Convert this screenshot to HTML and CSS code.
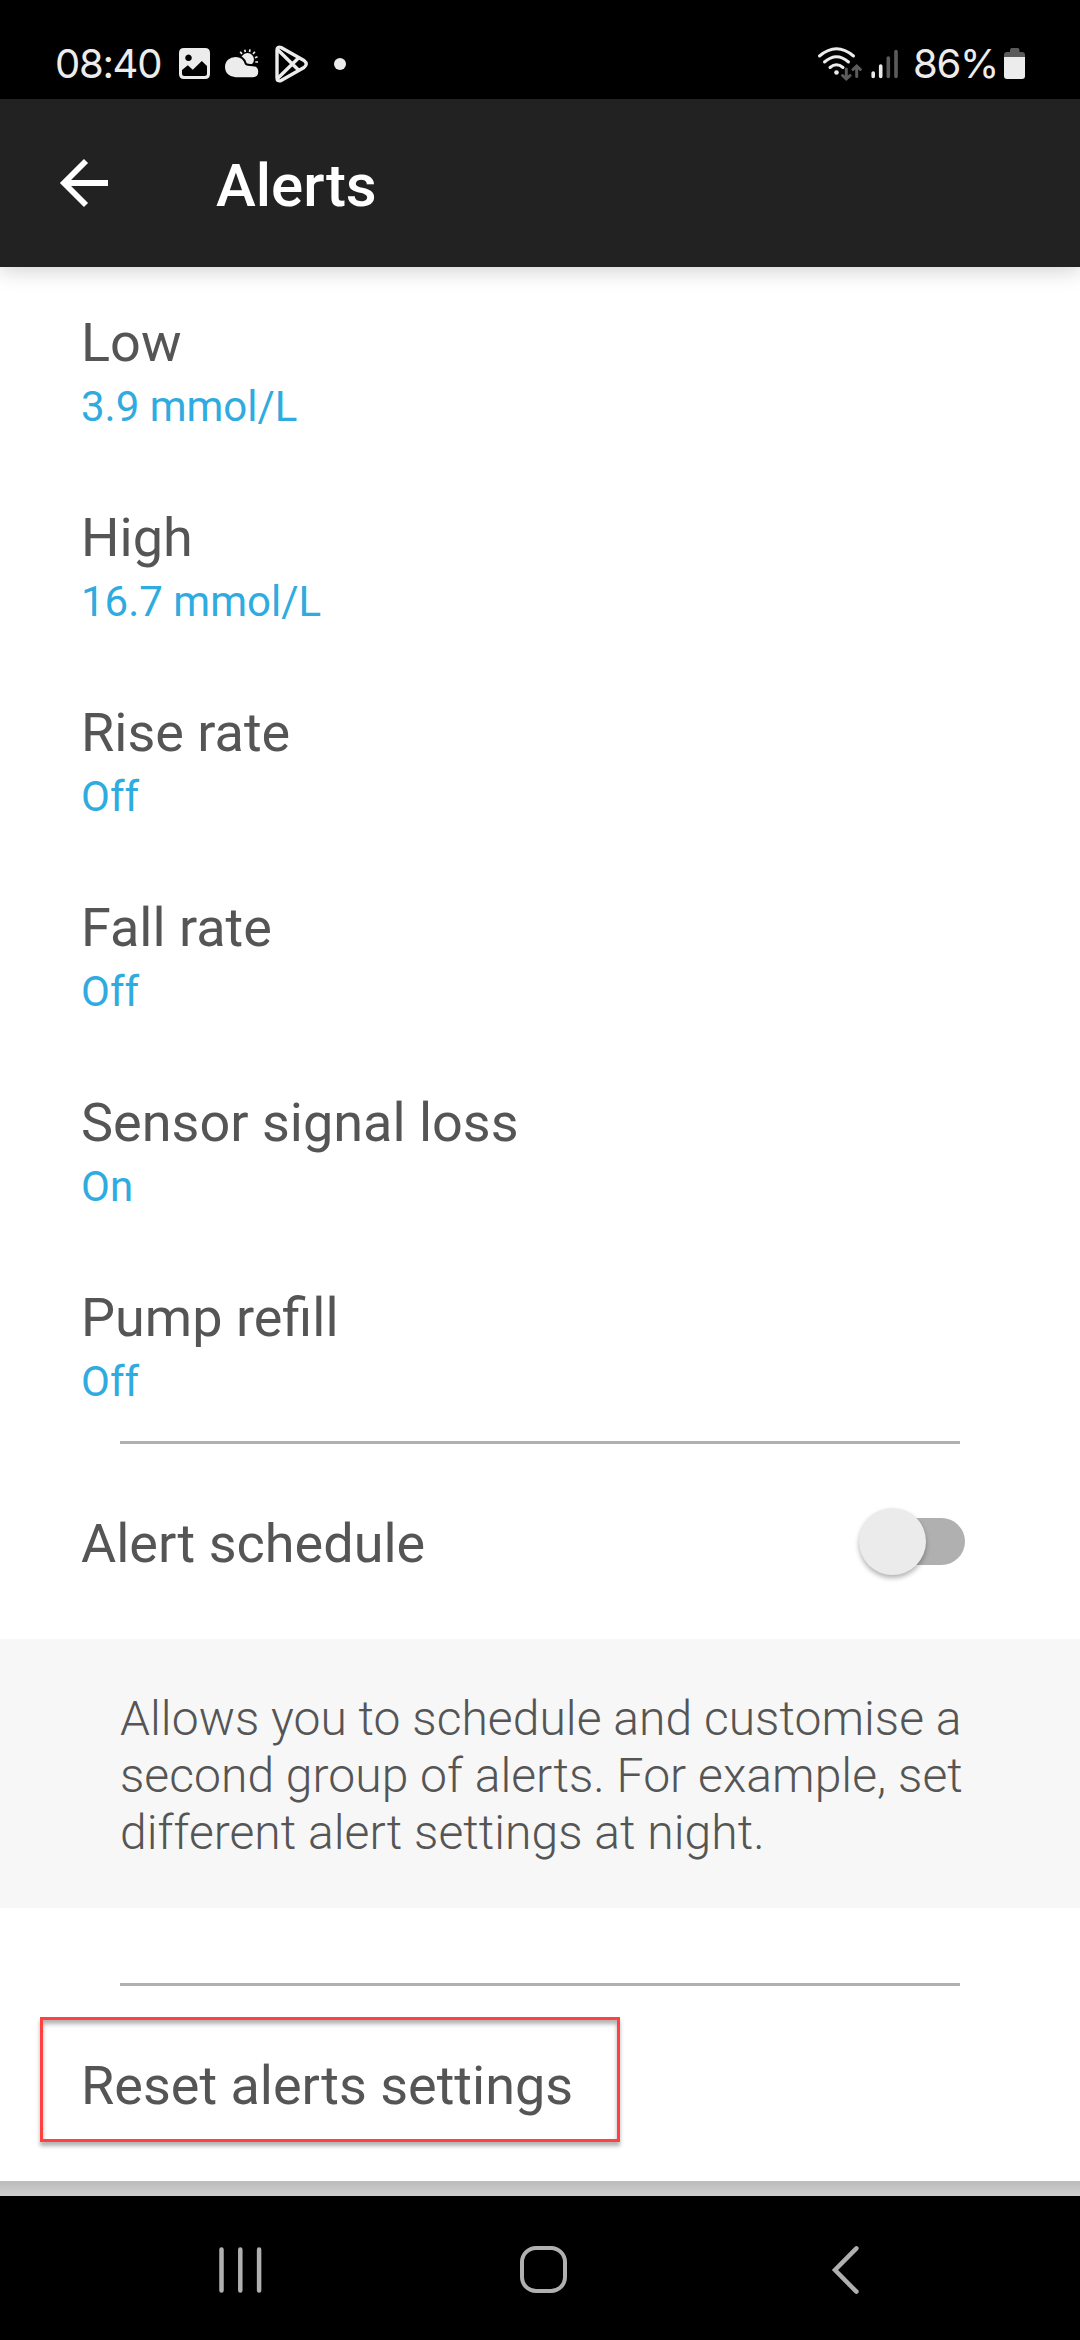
FILE: index.html
```html
<!DOCTYPE html>
<html lang="en">
<head>
  <meta charset="utf-8">
  <title>Alerts</title>
  <link rel="stylesheet" href="styles.css">
</head>
<body>
  <div class="statusbar">
    <span class="clock">08:40</span>
    <svg class="ic-image" width="31" height="31" viewBox="0 0 31 31">
      <path fill="#ececec" fill-rule="evenodd" d="M5 0H26Q31 0 31 5V26Q31 31 26 31H5Q0 31 0 26V5Q0 0 5 0ZM9.500 6.500a3.300 3.300 0 1 0 .01 0ZM3 22V25.500Q3 28 5.500 28H25.500Q28 28 28 25.500V18L22.800 13L13.800 21.800L8.800 17.300Z"/>
    </svg>
    <svg class="ic-weather" width="34" height="30" viewBox="0 0 34 30">
      <circle cx="22.500" cy="10.500" r="6.500" fill="#ececec"/>
      <path stroke="#ececec" stroke-width="1.700" d="M17 5L15.200 2.800M20.300 3L19.700 .8M24.500 3L25 .4M28 5L29.900 2.800M30 8.800L32.500 7.800M30.300 13H33"/>
      <path fill="#ececec" stroke="#000" stroke-width="2" d="M10.500 7C15.500 7 19.500 10 20.800 14.800C22 16.100 24 16.200 27.500 16.200C31.500 16.200 34.200 19 34.200 22.700C34.200 26.400 31.500 29.200 27.700 29.200H10.500C4 29.200 -1 24.500 -1 18C-1 11.500 4 7 10.500 7Z"/>
    </svg>
    <svg class="ic-play" width="34" height="38" viewBox="0 0 34 38" fill="none" stroke="#ececec" stroke-width="3.400" stroke-linejoin="round">
      <path d="M2 5V33Q2 37 6.500 35.300L29 22.500Q33.500 19 29 15.500L6.500 2.700Q2 1 2 5Z"/>
      <path d="M2.500 4.500L24 25.500M2.500 33.500L24 12.500"/>
    </svg>
    <i class="dot"></i>

    <svg class="ic-wifi" width="46" height="36" viewBox="0 0 46 36" fill="none" stroke-linecap="round">
      <g stroke="#ececec" stroke-width="3">
        <path d="M2.500 10Q19.500 -4.500 36.500 10"/>
        <path d="M7.500 16Q19.500 5.500 31.500 16"/>
        <path d="M13 21.500Q19.500 16 26 21.500"/>
      </g>
      <circle cx="19.500" cy="26.500" r="2.300" fill="#ececec"/>
      <g stroke="#5b5b5b" stroke-width="3">
        <path d="M29.300 23V32.500M25.500 29.500L29.300 33L33.100 29.500"/>
        <path d="M39.700 30.500V21M36 23.500L39.700 20L43.400 23.500"/>
      </g>
    </svg>
    <svg class="ic-signal" width="28" height="30" viewBox="0 0 28 30" stroke-width="3.600" stroke-linecap="round">
      <path stroke="#ececec" d="M2.200 24V27.500M9.700 17V27.500"/>
      <path stroke="#5b5b5b" d="M17.300 9V27.500M25 2.500V27.500"/>
    </svg>
    <span class="percent">86%</span>
    <svg class="ic-battery" width="21" height="31" viewBox="0 0 21 31">
      <path fill="#5b5b5b" d="M0 9V7Q0 4 3 4H6V2Q6 0 8 0H13.500Q15.500 0 15.500 2V4H18Q21 4 21 7V9Z"/>
      <path fill="#ececec" d="M0 9H21V28Q21 31 18 31H3Q0 31 0 28Z"/>
    </svg>
  </div>

  <header class="appbar">
    <svg width="48" height="48" viewBox="0 0 48 48" fill="none" stroke="#fff" stroke-width="5.800">
      <path d="M48 24H4M26 2L4 24L26 46"/>
    </svg>
    <h1>Alerts</h1>
  </header>

  <main class="page">
    <ul class="settings">
      <li><span class="name">Low</span><span class="value">3.9 mmol/L</span></li>
      <li><span class="name">High</span><span class="value">16.7 mmol/L</span></li>
      <li><span class="name">Rise rate</span><span class="value">Off</span></li>
      <li><span class="name">Fall rate</span><span class="value">Off</span></li>
      <li><span class="name">Sensor signal loss</span><span class="value">On</span></li>
      <li><span class="name">Pump refill</span><span class="value">Off</span></li>
    </ul>
    <hr>
    <div class="schedule">
      <span class="name">Alert schedule</span>
      <span class="switch"><i></i></span>
    </div>
    <p class="hint">Allows you to schedule and customise a<br>second group of alerts. For example, set<br>different alert settings at night.</p>
    <hr>
    <div class="reset"><span class="name">Reset alerts settings</span></div>
  </main>
  <div class="edge"></div>

  <nav class="navbar">
    <svg class="recents" width="43" height="46" viewBox="0 0 43 46" stroke="#b0b0b0" stroke-width="4.500" stroke-linecap="round">
      <path d="M2.500 2.500V43.500M21.300 2.500V43.500M40.100 2.500V43.500"/>
    </svg>
    <i class="home"></i>
    <svg class="back" width="28" height="48" viewBox="0 0 28 48" fill="none" stroke="#b0b0b0" stroke-width="4.500" stroke-linecap="round">
      <path d="M24.400 2.300L3 24L24.400 45.700"/>
    </svg>
  </nav>
</body>
</html>
```
FILE: styles.css
```css
* { box-sizing: border-box; }
body { margin: 0; width: 1080px; height: 2340px; overflow: hidden; background: #fff; font-family: Roboto, "Liberation Sans", sans-serif; }
svg { display: block; flex: none; overflow: visible; }

/* status bar */
.statusbar { display: flex; height: 99px; padding: 28px 55px 0 55px; align-items: center; background: #000; color: #ececec; font: 400 40px/40px Inter, sans-serif; letter-spacing: -1.3px; }
.clock { width: 124px; }
.ic-weather { margin-left: 15px; }
.ic-play { margin-left: 16px; }
.dot { width: 12px; height: 12px; margin-left: 25px; border-radius: 50%; background: #ececec; }
.ic-wifi { margin-left: auto; }
.ic-signal { margin-left: 8px; }
.percent { width: 91px; margin-left: 14px; }

/* title bar */
.appbar { position: relative; display: flex; height: 168px; padding-left: 60px; align-items: center; background: #222; box-shadow: 0 4px 20px rgba(0,0,0,.18); }
.appbar h1 { margin: 5px 0 0 108px; color: #fff; font-size: 60px; font-weight: 500; line-height: 70px; }

.page { height: 1914px; padding-top: 44px; color: #555; }
.name { font-size: 54px; line-height: 64px; }
.settings { margin: 0; padding: 0 81px; list-style: none; }
.settings li { display: flex; flex-direction: column; height: 195px; }
.settings .value { color: #2fabdf; font-size: 42px; line-height: 50px; margin-top: 7px; }
hr { width: 840px; height: 3px; margin: 0 auto; border: 0; background: #b0b0b0; }
.settings + hr { margin-top: -40px; }

.schedule { display: flex; height: 195px; padding: 0 115px 0 81px; align-items: center; justify-content: space-between; }
.schedule .name { padding-top: 5px; }
.switch { display: flex; width: 94px; height: 47px; align-items: center; border-radius: 24px; background: #b0b0b0; }
.switch i { flex: none; width: 67px; height: 67px; margin-left: -12px; border-radius: 50%; background: #ebebeb; box-shadow: 0 3px 5px rgba(0,0,0,.3); }

.hint { height: 269px; margin: 0 0 75px; padding: 51px 0 0 120px; background: #f7f7f7; font-size: 48px; font-weight: 300; line-height: 57px; letter-spacing: .04px; }

.reset { display: flex; width: 580px; height: 125px; margin: 31px 0 0 40px; padding: 12px 0 0 38px; align-items: center; border: 3px solid #ff4141; box-shadow: 0 4px 4px rgba(0,0,0,.3), inset 0 4px 4px rgba(0,0,0,.3); }

.edge { height: 15px; background: linear-gradient(#bbb, #d0d0d0); }

/* navigation keys */
.navbar { display: flex; height: 144px; padding: 3px 0 0 219px; align-items: center; background: #000; }
.home { width: 47px; height: 47px; margin-left: 258px; border: 4.5px solid #b0b0b0; border-radius: 16px; }
.back { margin-left: 265px; }
```
